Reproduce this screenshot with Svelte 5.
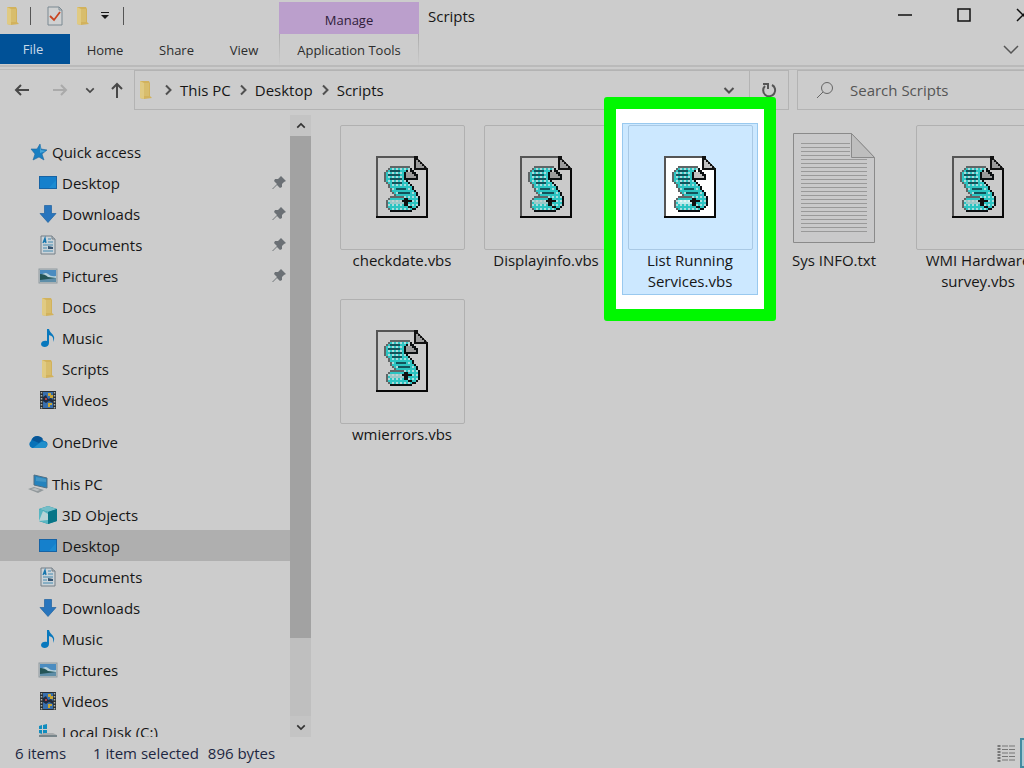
<script>
    const quickAccess = [
        { name: 'Desktop', icon: 'desktop', pinned: true },
        { name: 'Downloads', icon: 'download', pinned: true },
        { name: 'Documents', icon: 'document', pinned: true },
        { name: 'Pictures', icon: 'picture', pinned: true },
        { name: 'Docs', icon: 'folder' },
        { name: 'Music', icon: 'music' },
        { name: 'Scripts', icon: 'folder' },
        { name: 'Videos', icon: 'video' }
    ];

    const thisPc = [
        { name: '3D Objects', icon: 'cube' },
        { name: 'Desktop', icon: 'desktop', current: true },
        { name: 'Documents', icon: 'document' },
        { name: 'Downloads', icon: 'download' },
        { name: 'Music', icon: 'music' },
        { name: 'Pictures', icon: 'picture' },
        { name: 'Videos', icon: 'video' },
        { name: 'Local Disk (C:)', icon: 'disk' }
    ];

    const groups = [
        { name: 'Quick access', icon: 'star', items: quickAccess },
        { name: 'OneDrive', icon: 'cloud', items: [] },
        { name: 'This PC', icon: 'pc', items: thisPc }
    ];

    const files = [
        'checkdate.vbs',
        'Displayinfo.vbs',
        'List Running Services.vbs',
        'Sys INFO.txt',
        'WMI Hardware survey.vbs',
        'wmierrors.vbs'
    ];

    const path = ['This PC', 'Desktop', 'Scripts'];

    let selected = $state('List Running Services.vbs');
</script>

{#snippet icon(name)}
    <svg class="icon" viewBox="0 0 20 20" aria-hidden="true">
        {#if name === 'folder'}
            <path d="M4 1h9l1 2v13l2 2-8 1-4-1z" fill="#d2b25c" />
            <path d="M4 1l4 2v16l-4-1z" fill="#e0ca82" />
            <path d="M8 3h5v13H8z" fill="#d8bd6c" />
        {:else if name === 'desktop'}
            <rect x="1" y="3" width="18" height="13" fill="#1763a4" />
            <rect x="2" y="4" width="16" height="11" fill="#1580cc" />
            <path d="M11 15l7-8v8z" fill="#1b8bd2" />
        {:else if name === 'download'}
            <path d="M6.500 1.500h7v8H18l-8 9-8-9h4.500z" fill="#2875bd" stroke="#1e629f" stroke-width="0.700" />
        {:else if name === 'document'}
            <path d="M3 1h11l3 3v15H3z" fill="#cbd3d8" stroke="#747f86" />
            <path d="M14 1v3h3" fill="#aeb8be" stroke="#747f86" />
            <path d="M5 8l2-5 1 5M6 6.500h2" fill="none" stroke="#1675ad" stroke-width="1.300" />
            <path d="M10 4h3M10 7h5M5 10h10M5 13h4M5 16h10" stroke="#4389af" />
            <path d="M10 11l5 1v2h-5z" fill="#355573" />
        {:else if name === 'picture'}
            <rect x="1" y="3" width="18" height="14" fill="#bdc5c8" stroke="#8f9a9f" />
            <rect x="2" y="4" width="16" height="12" fill="#4b8cc0" />
            <path d="M2 10q5-5 8-2t8 2v2H2z" fill="#b6d1db" />
            <path d="M2 8q5 0 8 3l8 1v2H2z" fill="#245557" />
            <path d="M2 14l16-2v4H2z" fill="#5f8ea8" />
        {:else if name === 'music'}
            <path d="M9 1h2c1 5 8 6 4 13 1-5-1-6-4-7v8c0 5-8 5-8 1 0-3 4-4 6-3z" fill="#0878bd" />
        {:else if name === 'video'}
            <rect x="2" y="1" width="16" height="18" fill="#2a3036" />
            <path d="M3.500 2v17M16.500 2v17" stroke="#b0b4a8" stroke-width="1.500" stroke-dasharray="1.500 1.500" />
            <rect x="5" y="2" width="10" height="16" fill="#386fae" />
            <path d="M10 3h3v2h2v3h-3V6h-2zM10 13h4v2h-2v2h-2z" fill="#c9a635" />
            <path d="M5 7l3-2 2 4 3-1 2 2v3l-4-2-3 2-3-2z" fill="#202c40" />
            <path d="M7 8h2v2H7z" fill="#ac4547" />
        {:else if name === 'star'}
            <path d="M12 2l1 5 6 1-5 4 2 6-5-3-6 3 2-6-4-5 6 0z" fill="#197fc2" stroke="#1e679e" stroke-width="0.600" />
            <path d="M12 3l1 5 5 1-6 2z" fill="#47a5d7" />
        {:else if name === 'cloud'}
            <path d="M4 16a4 4 0 0 1-1-7c1-4 5-6 9-4l4 4c4 0 5 5 1 7z" fill="#0872b8" />
            <path d="M4 8c1-4 7-6 11-1l-4 4z" fill="#075697" />
            <path d="M5 16l8-6c4-2 8 2 5 5l-1 1z" fill="#218fcb" />
        {:else if name === 'pc'}
            <path d="M6 1l13 3v10L6 11z" fill="#2583bd" stroke="#536f82" />
            <path d="M8 3l10 2v3L8 7z" fill="#4396c5" />
            <path d="M0 15l6-2 10 3-6 3z" fill="#92999c" />
            <path d="M3 15l4-1 5 2-3 1z" fill="#bcc0c1" />
        {:else if name === 'cube'}
            <path d="M10 1l9 3v12l-9 3-9-3V4z" fill="#188a9d" />
            <path d="M1 4l9-3 9 3-9 3z" fill="#75bec8" />
            <path d="M1 4l9 3v12l-9-3z" fill="#58b6c2" />
            <path d="M5 6l5 3v6l-9 1z" fill="#b7d4d7" />
            <path d="M10 7l9-3v12l-9 3z" fill="#087587" />
        {:else if name === 'disk'}
            <path d="M1 4l3-1v4H1zM5 3l4-1v5H5zM1 8h3v4l-3-1zM5 8h4v5l-4-1z" fill="#118dbe" />
            <path d="M1 13l5-2h9l4 2v4H1z" fill="#a8abac" />
            <path d="M1 13h18v3H1z" fill="#78858a" />
        {/if}
    </svg>
{/snippet}

{#snippet chevron(dir)}
    <svg class="chevron {dir}" viewBox="0 0 12 12" aria-hidden="true">
        <path d="M1.500 4l4.500 4.500L10.500 4" />
    </svg>
{/snippet}

{#snippet scriptIcon()}
    <svg class="script-icon" viewBox="-1 0 28 32" aria-hidden="true">
        <defs>
            <pattern id="dither" width="2" height="2" patternUnits="userSpaceOnUse">
                <rect width="2" height="2" fill="#2cc4c2" />
                <path d="M0 0h1v1H0z" fill="#a9dcdc" />
            </pattern>
        </defs>
        <path d="M.5.500h19l6 6v24H.500z" fill="var(--paper)" stroke="#555" />
        <path d="M25 6h1v25H0v-1h25z" fill="#080808" />
        <path d="M20 1v5h5z" fill="var(--fold)" />
        <path d="M19 0h2v2h1v1h1v1h1v1h1v1h1v1h-7zM20 2v4h4V5h-1V4h-1V3h-1V2z" fill="#111" />
        <!-- scroll body -->
        <path d="M7 6h10v1h-2v1h-1v4h1v1h1v1h1v1h1v1h1v1h1v2h1v6h-1v1h-2v1H7v-1H5v-4h2v-1h4v-1H9v-1H8v-2H7v-2H6v-1H5V8h1V7h1z" fill="url(#dither)" />
        <path d="M7 22h7v2H7z" fill="var(--paper)" opacity="0.700" />
        <!-- curl at the top -->
        <path d="M15 8h2V7h1v1h1v1h1v3h-5z" fill="var(--fold)" />
        <path d="M17 6h1v1h1v1h1v1h1v3h-1v-2h-1V9h-1V8h-1zM15 7h1v1h-1zM14 8h1v4h-1zM15 11h5v1h-5zM15 12h1v1h-1zM16 13h1v1h-1zM17 14h1v1h-1zM18 15h1v2h-1zM19 17h1v1h-1zM20 18h1v2h-1zM21 20h1v5h-1zM20 25h1v1h-1zM18 26h2v1h-2zM7 27h11v1H7z" fill="#0b0f11" />
        <!-- left edge -->
        <path d="M7 5h10v1H7zM6 6h1v1H6zM5 7h1v1H5zM4 8h1v5H4zM5 13h1v1H5zM6 14h1v2H6zM7 16h1v2H7zM8 18h1v1H8zM9 19h1v2H9zM7 20h7v1H7zM6 21h1v1H6zM5 22h1v4H5zM6 26h1v1H6z" fill="#606566" />
        <!-- writing -->
        <path d="M7 7h5v1H7zM6 9h6v1H6zM7 11h6v1H7zM8 13h5v1H8zM10 16h5v1h-5zM11 18h6v1h-6z" fill="#13535b" />
        <path d="M14 21h2v1h2v1h-2v2h2v1h-2v-1h-2v-2h-1v-1h1z" fill="#111" />
    </svg>
{/snippet}

{#snippet textIcon()}
    <svg class="text-icon" viewBox="0 0 82 110" aria-hidden="true">
        <path d="M.5.500h58l23 24v85H.500z" fill="#c9c9ca" stroke="#8a8a8a" />
        <path d="M8 10.500h49M8 14.500h49M8 18.500h49M8 22.500h49" stroke="#999" />
        {#each Array(19) as _, i}
            <path d="M8 {26.5 + i * 4}h66" stroke="#999" />
        {/each}
        <path d="M58.500.500v24h23z" fill="#bebebe" stroke="#8a8a8a" />
    </svg>
{/snippet}

<div class="viewport">
    <div class="window">
        <header class="titlebar">
            <div class="quick-toolbar">
                {@render icon('folder')}
                <span class="divider"></span>
                <button aria-label="Properties">
                    <svg class="icon" viewBox="0 0 20 20">
                        <path d="M3 1h11l3 3v15H3z" fill="#d0d1d1" stroke="#7b8992" />
                        <path d="M14 1v3h3" fill="none" stroke="#7b8992" />
                        <path d="M5 10l4 4 6-8" fill="none" stroke="#c94420" stroke-width="1.800" />
                    </svg>
                </button>
                <button aria-label="New folder">{@render icon('folder')}</button>
                <button class="customize" aria-label="Customize toolbar">
                    <svg viewBox="0 0 8 8"><path d="M0 0h8v1H0zM0 3h8L4 7z" fill="#181818" /></svg>
                </button>
                <span class="divider"></span>
            </div>
            <div class="manage">Manage</div>
            <h1>Scripts</h1>
            <div class="window-buttons">
                <button aria-label="Minimize"><svg viewBox="0 0 14 14"><path d="M0 7h14" /></svg></button>
                <button aria-label="Maximize"><svg viewBox="0 0 14 14"><path d="M1 1h12v12H1z" /></svg></button>
                <button aria-label="Close"><svg viewBox="0 0 14 14"><path d="M1 1l12 12M13 1L1 13" /></svg></button>
            </div>
        </header>

        <nav class="ribbon" aria-label="Ribbon">
            <button class="file-tab">File</button>
            <button class="home-tab">Home</button>
            <button class="share-tab">Share</button>
            <button class="view-tab">View</button>
            <button class="tools-tab">Application Tools</button>
            <button class="expand" aria-label="Expand the ribbon">
                <svg viewBox="0 0 16 10"><path d="M1 1l7 7 7-7" /></svg>
            </button>
        </nav>

        <div class="navbar">
            <div class="history">
                <button aria-label="Back"><svg viewBox="0 0 16 16"><path d="M7 3L2 8l5 5M2 8h13" /></svg></button>
                <button class="disabled" aria-label="Forward"><svg viewBox="0 0 16 16"><path d="M9 3l5 5-5 5M14 8H1" /></svg></button>
                <button class="recent" aria-label="Recent locations">{@render chevron('down')}</button>
                <button aria-label="Up"><svg viewBox="0 0 16 16"><path d="M3 7l5-5 5 5M8 2v14" /></svg></button>
            </div>
            <div class="address">
                {@render icon('folder')}
                {#each path as part}
                    {@render chevron('right')}
                    <a href="#{part}">{part}</a>
                {/each}
                <button class="previous" aria-label="Previous locations">{@render chevron('down')}</button>
                <button class="refresh" aria-label="Refresh">
                    <svg viewBox="0 0 16 16"><path d="M11 3a6 6 0 1 1-7 1M2 2h5v5" /></svg>
                </button>
            </div>
            <label class="search">
                <svg viewBox="0 0 18 18" aria-hidden="true"><circle cx="11" cy="7" r="5.500" /><path d="M7 11l-6 6" /></svg>
                <input type="search" placeholder="Search Scripts" aria-label="Search Scripts">
            </label>
        </div>

        <div class="content">
            <nav class="tree" aria-label="Folders">
                {#each groups as group}
                    <div class="group">
                        <a class="row root" href="#{group.name}">{@render icon(group.icon)}{group.name}</a>
                        {#each group.items as item}
                            <a class="row" class:current={item.current} href="#{item.name}">
                                {@render icon(item.icon)}{item.name}
                                {#if item.pinned}
                                    <svg class="pin" viewBox="0 0 14 14" aria-hidden="true">
                                        <path d="M9 0l5 5-2 1-2 2v3l-2 1-3-3-4 4H0l5-5-3-3 1-2h3l3-3z" />
                                    </svg>
                                {/if}
                            </a>
                        {/each}
                    </div>
                {/each}
            </nav>

            <div class="scrollbar">
                <button aria-label="Scroll up">{@render chevron('up')}</button>
                <div class="track"><div class="thumb"></div></div>
                <button aria-label="Scroll down">{@render chevron('down')}</button>
            </div>

            <main class="files">
                {#each files as file}
                    <button class="file" class:selected={selected === file} onclick={() => (selected = file)}>
                        {#if file.endsWith('.txt')}
                            <span class="thumbnail plain">{@render textIcon()}</span>
                        {:else}
                            <span class="thumbnail">{@render scriptIcon()}</span>
                        {/if}
                        <span class="label">{file}</span>
                    </button>
                {/each}
            </main>
        </div>

        <footer class="status">
            <span class="count">{files.length} items</span>
            <span>1 item selected</span>
            <span>896 bytes</span>
            <div class="views">
                <button aria-label="Details view">
                    <svg viewBox="0 0 18 18">
                        <path d="M2 1v17" stroke="#777" stroke-width="3" stroke-dasharray="2 1" />
                        <path d="M5 2h6M12 2h6M5 5.500h6M12 5.500h6M5 9h6M12 9h6M5 12.500h6M12 12.500h6M5 16h6M12 16h6" stroke="#777" />
                    </svg>
                </button>
                <button class="active" aria-label="Large icons view"></button>
            </div>
        </footer>
    </div>
</div>

<style>
    :global(body) {
        margin: 0;
        background: #ccc;
    }

    .viewport {
        height: 100vh;
        overflow: hidden;
        font-family: "Open Sans", "Noto Sans", sans-serif;
        font-size: 15px;
        color: #161616;
    }

    /* the window hangs over the right edge of the screen */
    .window {
        display: flex;
        flex-direction: column;
        width: calc(100% + 28px);
        height: 100%;
        background: #ccc;
    }

    button {
        display: flex;
        align-items: center;
        justify-content: center;
        padding: 0;
        border: 0;
        background: none;
        color: inherit;
        font: inherit;
    }

    a {
        color: inherit;
        text-decoration: none;
    }

    svg {
        display: block;
        flex: none;
    }

    .icon {
        width: 20px;
        height: 20px;
    }

    .chevron {
        width: 12px;
        height: 12px;
        fill: none;
        stroke: #505050;
        stroke-width: 2;
    }

    .chevron.right {
        transform: rotate(-90deg);
    }

    .chevron.up {
        transform: rotate(180deg);
    }

    .titlebar {
        display: flex;
        flex: none;
        height: 34px;
    }

    .quick-toolbar {
        box-sizing: border-box;
        display: flex;
        align-items: center;
        width: 279px;
        padding: 0 0 2px 3px;
    }

    .quick-toolbar .divider {
        width: 1px;
        height: 18px;
        margin: 0 14px 0 7px;
        background: #555;
    }

    .quick-toolbar button {
        margin-right: 8px;
    }

    .quick-toolbar .customize {
        margin: 0 7px 0 0;
    }

    .customize svg {
        width: 8px;
        height: 8px;
    }

    .manage {
        box-sizing: border-box;
        width: 140px;
        margin-top: 2px;
        background: #bb9fcc;
        color: #30203a;
        font-size: 13px;
        line-height: 36px;
        text-align: center;
    }

    h1 {
        margin: 0 0 0 9px;
        font-size: 15px;
        font-weight: 400;
        line-height: 32px;
    }

    .window-buttons {
        display: flex;
        margin-left: auto;
    }

    .window-buttons button {
        width: 59px;
        height: 30px;
    }

    .window-buttons svg {
        width: 14px;
        height: 14px;
        fill: none;
        stroke: #111;
        stroke-width: 1.500;
    }

    .ribbon {
        display: flex;
        flex: none;
        height: 31px;
        border-bottom: 2px solid #bababa;
        font-size: 13px;
        color: #2c2c2c;
    }

    .ribbon button {
        height: 31px;
    }

    .ribbon .file-tab {
        width: 70px;
        height: 30px;
        padding-right: 4px;
        background: #005197;
        color: #c9d9e8;
    }

    .home-tab {
        width: 70px;
    }

    .share-tab {
        width: 73px;
    }

    .view-tab {
        width: 62px;
    }

    .ribbon .tools-tab {
        width: 140px;
        margin-left: 4px;
        border: 1px solid;
        border-width: 0 1px;
        border-image: linear-gradient(#aaa, #ccc) 1;
    }

    .ribbon .expand {
        margin: 0 33px 0 auto;
    }

    .expand svg {
        width: 16px;
        height: 10px;
        fill: none;
        stroke: #555;
        stroke-width: 1.500;
    }

    .navbar {
        display: flex;
        flex: none;
        height: 40px;
        margin-top: 2px;
        border-top: 1px solid #bababa;
    }

    .history {
        box-sizing: border-box;
        display: flex;
        align-items: center;
        width: 134px;
        padding: 0 8px 0 14px;
        gap: 22px;
    }

    .history svg {
        width: 16px;
        height: 16px;
        fill: none;
        stroke: #484848;
        stroke-width: 2;
    }

    .history .disabled svg {
        stroke: #aaa;
    }

    .history .recent {
        margin: 0 -8px 0 -5px;
    }

    .history .recent svg {
        width: 10px;
        height: 10px;
    }

    .address {
        box-sizing: border-box;
        display: flex;
        align-items: center;
        flex: 1;
        padding-left: 1px;
        border: 1px solid #b3b3b3;
    }

    .address > .chevron {
        margin: 0 6px;
    }

    .address .previous {
        width: 40px;
        margin-left: auto;
    }

    .address .refresh {
        width: 39px;
        height: 100%;
        border-left: 1px solid #b3b3b3;
    }

    .refresh svg {
        width: 16px;
        height: 16px;
        fill: none;
        stroke: #555;
        stroke-width: 2;
    }

    .search {
        box-sizing: border-box;
        display: flex;
        align-items: center;
        width: 255px;
        margin-left: 8px;
        padding-left: 18px;
        gap: 16px;
        border: 1px solid #b3b3b3;
    }

    .search svg {
        width: 18px;
        height: 18px;
        fill: none;
        stroke: #666;
    }

    .search input {
        min-width: 0;
        flex: 1;
        padding: 0;
        border: 0;
        outline: 0;
        background: none;
        font: inherit;
    }

    .search input::placeholder {
        color: #555;
        opacity: 1;
    }

    .content {
        display: flex;
        flex: 1;
        min-height: 0;
        padding-top: 5px;
    }

    .tree {
        box-sizing: border-box;
        width: 290px;
        padding-top: 21px;
        overflow: hidden;
    }

    .group {
        margin-bottom: 11px;
    }

    .row {
        display: flex;
        align-items: center;
        height: 31px;
        padding-left: 38px;
        gap: 4px;
    }

    .row.root {
        padding-left: 28px;
    }

    .row.current {
        background: #afafaf;
    }

    .pin {
        width: 14px;
        height: 14px;
        margin: 0 4px 0 auto;
        fill: #6b7075;
    }

    .scrollbar {
        display: flex;
        flex-direction: column;
        flex: none;
        width: 21px;
        background: #bfbfbf;
    }

    .scrollbar button {
        height: 21px;
        background: #c4c4c4;
    }

    .scrollbar .chevron {
        width: 10px;
        height: 10px;
        stroke: #333;
    }

    .track {
        flex: 1;
    }

    .thumb {
        height: 86.500%;
        background: #a2a2a2;
    }

    .files {
        display: grid;
        grid-template-columns: repeat(auto-fill, 136px);
        align-content: start;
        flex: 1;
        gap: 2px 8px;
        padding: 8px 6px 0 23px;
    }

    .file {
        --paper: #cacaca;
        --fold: #9b9b9b;
        box-sizing: border-box;
        position: relative;
        flex-direction: column;
        justify-content: flex-start;
        min-height: 172px;
        padding: 1px;
        border: 1px solid transparent;
    }

    .thumbnail {
        box-sizing: border-box;
        display: flex;
        align-items: center;
        justify-content: center;
        width: 125px;
        height: 125px;
        border: 1px solid #b0b0b0;
        border-radius: 2px;
    }

    .thumbnail.plain {
        border-color: transparent;
    }

    .script-icon {
        width: 56px;
        height: 64px;
        shape-rendering: crispEdges;
    }

    .text-icon {
        width: 82px;
        height: 110px;
    }

    .label {
        width: 112px;
        line-height: 21px;
        text-align: center;
    }

    .file.selected {
        --paper: #fff;
        --fold: #c2c2c2;
        z-index: 1;
    }

    .selected .thumbnail {
        border-color: #a9c9e5;
    }

    .file.selected::before,
    .file.selected::after {
        content: "";
        position: absolute;
        z-index: -1;
    }

    .file.selected::before {
        inset: -27px -19px;
        border: 12px solid #00f800;
        border-radius: 3px;
        background: #fff;
    }

    .file.selected::after {
        inset: -1px;
        border: 1px solid #99c9ef;
        background: #cce8ff;
    }

    .status {
        display: flex;
        align-items: center;
        flex: none;
        height: 31px;
        padding: 0 8px 0 15px;
        gap: 9px;
        color: #1c2742;
    }

    .count {
        margin-right: 18px;
    }

    .views {
        display: flex;
        align-items: center;
        align-self: stretch;
        margin-left: auto;
        gap: 4px;
    }

    .views svg {
        width: 20px;
        height: 18px;
    }

    .views .active {
        box-sizing: border-box;
        width: 24px;
        height: 30px;
        border: 2px solid #448ba0;
        background: #a9cbd5;
    }
</style>
